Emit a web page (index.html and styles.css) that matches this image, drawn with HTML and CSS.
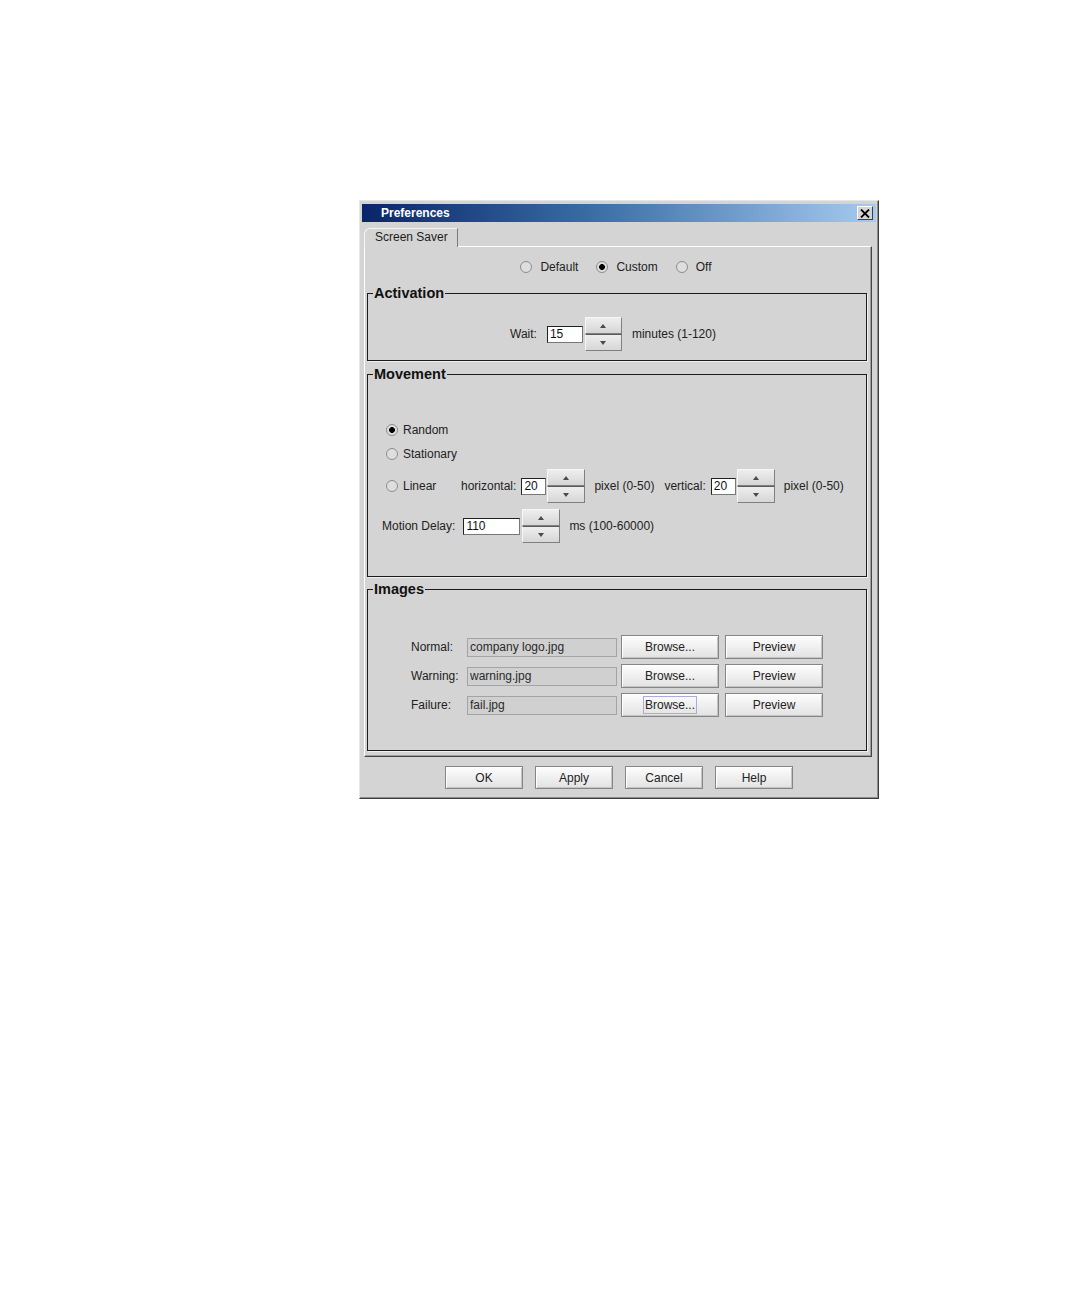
FILE: index.html
```html
<!DOCTYPE html>
<html>
<head>
<meta charset="utf-8">
<title>Preferences</title>
<link rel="stylesheet" href="styles.css">
</head>
<body>
<div class="page">
  <div class="dialog">
    <div class="titlebar">
      <span class="title">Preferences</span>
      <span class="close"><svg width="10" height="9" viewBox="0 0 10 9"><path d="M1 0.5 L9 8.5 M9 0.5 L1 8.5" stroke="#000" stroke-width="1.8" fill="none"/></svg></span>
    </div>
    <div class="tabs"><div class="tab">Screen Saver</div></div>
    <div class="panel">
      <div class="moderow">
        <label class="radio"><span class="rb"></span>Default</label>
        <label class="radio"><span class="rb on"></span>Custom</label>
        <label class="radio"><span class="rb"></span>Off</label>
      </div>

      <fieldset class="group">
        <legend>Activation</legend>
        <div class="act-row">
          <span class="lbl">Wait:</span>
          <input class="num w-wait" value="15">
          <span class="spin"><span class="sb up"></span><span class="sb down"></span></span>
          <span class="lbl after">minutes (1-120)</span>
        </div>
      </fieldset>

      <fieldset class="group mv">
        <legend>Movement</legend>
        <div class="mv-body">
          <div class="mv-row r-random"><label class="radio small"><span class="rb on"></span>Random</label></div>
          <div class="mv-row r-stat"><label class="radio small"><span class="rb"></span>Stationary</label></div>
          <div class="mv-row r-linear">
            <label class="radio small linear"><span class="rb"></span>Linear</label>
            <span class="lbl">horizontal:</span>
            <input class="num w-px" value="20">
            <span class="spin"><span class="sb up"></span><span class="sb down"></span></span>
            <span class="lbl unit">pixel (0-50)</span>
            <span class="lbl vert">vertical:</span>
            <input class="num w-px" value="20">
            <span class="spin"><span class="sb up"></span><span class="sb down"></span></span>
            <span class="lbl unit">pixel (0-50)</span>
          </div>
          <div class="mv-row r-delay">
            <span class="lbl">Motion Delay:</span>
            <input class="num w-delay" value="110">
            <span class="spin"><span class="sb up"></span><span class="sb down"></span></span>
            <span class="lbl unit">ms (100-60000)</span>
          </div>
        </div>
      </fieldset>

      <fieldset class="group img">
        <legend>Images</legend>
        <div class="img-body">
          <div class="img-row">
            <span class="img-lbl">Normal:</span>
            <input class="path" value="company logo.jpg" readonly>
            <button class="btn browse">Browse...</button>
            <button class="btn preview">Preview</button>
          </div>
          <div class="img-row">
            <span class="img-lbl">Warning:</span>
            <input class="path" value="warning.jpg" readonly>
            <button class="btn browse">Browse...</button>
            <button class="btn preview">Preview</button>
          </div>
          <div class="img-row">
            <span class="img-lbl">Failure:</span>
            <input class="path" value="fail.jpg" readonly>
            <button class="btn browse"><span class="focus">Browse...</span></button>
            <button class="btn preview">Preview</button>
          </div>
        </div>
      </fieldset>
    </div>
    <div class="footer">
      <button class="btn fbtn">OK</button>
      <button class="btn fbtn">Apply</button>
      <button class="btn fbtn">Cancel</button>
      <button class="btn fbtn">Help</button>
    </div>
  </div>
</div>
</body>
</html>
```

FILE: styles.css
```css
body {
  margin: 0;
  background: #ffffff;
  font-family: "Liberation Sans", Arial, sans-serif;
  font-size: 12px;
  color: #222222;
}

.page {
  padding: 200px 0 0 359px;
}

.dialog {
  width: 520px;
  box-sizing: border-box;
  background: #d4d4d4;
  border: 1px solid;
  border-color: #e6e6e6 #3c3c3c #3c3c3c #e6e6e6;
  box-shadow: inset -1px -1px 0 #8c8c8c;
  padding: 3px 2px 9px 2px;
}

.titlebar {
  height: 18px;
  display: flex;
  align-items: center;
  justify-content: space-between;
  padding-left: 19px;
  background: linear-gradient(to right, #0a246a 0%, #3a6ea5 45%, #a6caf0 100%);
}

.title {
  color: #ffffff;
  font-weight: bold;
  font-size: 12px;
}

.close {
  width: 16px;
  height: 14px;
  box-sizing: border-box;
  margin-right: 3px;
  background: #d4d4d4;
  border: 1px solid;
  border-color: #ffffff #404040 #404040 #ffffff;
  display: flex;
  align-items: center;
  justify-content: center;
}

.close svg {
  display: block;
}

.tabs {
  display: flex;
  margin: 6px 0 0 2px;
}

.tab {
  position: relative;
  z-index: 1;
  width: 94px;
  height: 19px;
  box-sizing: border-box;
  margin-bottom: -1px;
  padding: 1px 0 0 10px;
  background: #d4d4d4;
  border: 1px solid;
  border-bottom: none;
  border-color: #f4f4f4 #7c7c7c transparent #f4f4f4;
  border-top-left-radius: 6px;
  font-size: 12px;
  line-height: 14px;
  color: #1c1c1c;
}

.panel {
  margin: 0 4px 0 2px;
  border: 1px solid;
  border-color: #ffffff #454545 #454545 #ffffff;
  box-shadow: inset -1px -1px 0 #a0a0a0;
  padding: 10px 4px 5px 2px;
}

.moderow {
  height: 20px;
  display: flex;
  align-items: center;
  justify-content: center;
  gap: 18px;
  padding-right: 2px;
}

.radio {
  display: flex;
  align-items: center;
  color: #222222;
}

.rb {
  width: 12px;
  height: 12px;
  box-sizing: border-box;
  border-radius: 50%;
  border: 1px solid #8c8c8c;
  background: #dedede;
  margin-right: 8px;
}

.rb.on {
  background: radial-gradient(circle, #000000 0, #000000 2.6px, #dedede 3.2px);
}

.radio.small .rb {
  margin-right: 5px;
}

.group {
  margin: 8px 0 0 0;
  padding: 0;
  border: 1px solid #1c1c1c;
  box-shadow: 1px 1px 0 #f0f0f0;
  min-width: 0;
}

.group.mv {
  margin-top: 5px;
}

.group.img {
  margin-top: 4px;
}

.group legend {
  margin-left: 5px;
  padding: 0 1px;
  font-weight: bold;
  font-size: 14.5px;
  line-height: 16px;
  color: #111111;
}

.lbl {
  white-space: nowrap;
}

.num {
  height: 17px;
  box-sizing: border-box;
  border: 1px solid;
  border-color: #222222 #777777 #777777 #222222;
  background: #ffffff;
  padding: 0 0 0 2px;
  margin: 0;
  font-family: "Liberation Sans", Arial, sans-serif;
  font-size: 12px;
  color: #111111;
  outline: none;
}

.w-wait { width: 36px; margin-left: 10px; }
.w-px { width: 25px; margin-left: 5px; }
.w-delay { width: 57px; margin-left: 8px; }

.spin {
  width: 38px;
  height: 34px;
  display: flex;
  flex-direction: column;
  margin-left: 2px;
}

.w-px + .spin { margin-left: 1px; }
.w-wait + .spin { width: 37px; }

.sb {
  flex: 1;
  box-sizing: border-box;
  border: 1px solid;
  border-color: #f6f6f6 #808080 #808080 #f6f6f6;
  background: linear-gradient(#eeeeee, #d6d6d6);
  display: flex;
  align-items: center;
  justify-content: center;
}

.sb.down {
  border-top-color: #5a5a5a;
}

.sb::before {
  content: "";
  width: 0;
  height: 0;
  border-left: 3px solid transparent;
  border-right: 3px solid transparent;
}

.sb.up::before {
  border-bottom: 4px solid #4a4a4a;
}

.sb.down::before {
  border-top: 4px solid #4a4a4a;
}

.act-row {
  display: flex;
  align-items: center;
  justify-content: center;
  padding: 16px 8px 9px 0;
}

.lbl.after { margin-left: 10px; }

.mv-body {
  padding: 38px 0 33px 14px;
}

.mv-row {
  display: flex;
  align-items: center;
}

.r-random, .r-stat {
  height: 20px;
  margin-left: 4px;
}

.r-stat { margin-top: 4px; }

.r-linear {
  height: 34px;
  margin-top: 5px;
  margin-left: 4px;
}

.radio.linear {
  width: 75px;
}

.lbl.unit { margin-left: 9px; }
.lbl.vert { margin-left: 10px; }

.r-delay {
  height: 34px;
  margin-top: 6px;
}

.img-body {
  padding: 38px 0 33px 0;
}

.img-row {
  height: 24px;
  display: flex;
  align-items: center;
  justify-content: center;
}

.img-row + .img-row {
  margin-top: 5px;
}

.img-lbl {
  width: 56px;
  color: #222222;
}

.path {
  width: 150px;
  height: 19px;
  box-sizing: border-box;
  margin: 0;
  padding: 0 0 0 2px;
  border: 1px solid #a4a4a4;
  background: #d0d0d0;
  font-family: "Liberation Sans", Arial, sans-serif;
  font-size: 12px;
  color: #2a2a2a;
  outline: none;
}

.btn {
  box-sizing: border-box;
  margin: 0;
  padding: 0;
  border: 1px solid #858585;
  background: linear-gradient(#fdfdfd, #e2e2e2);
  box-shadow: inset 1px 1px 0 #ffffff, inset -1px -1px 0 #c4c4c4;
  font-family: "Liberation Sans", Arial, sans-serif;
  font-size: 12px;
  color: #222222;
  display: flex;
  align-items: center;
  justify-content: center;
}

.browse, .preview {
  width: 98px;
  height: 24px;
}

.browse { margin-left: 4px; }
.preview { margin-left: 6px; }

.focus {
  outline: 1px solid #a8acd8;
  padding: 1px 1px;
}

.footer {
  display: flex;
  justify-content: center;
  gap: 12px;
  margin-top: 9px;
}

.fbtn {
  width: 78px;
  height: 23px;
}
```
